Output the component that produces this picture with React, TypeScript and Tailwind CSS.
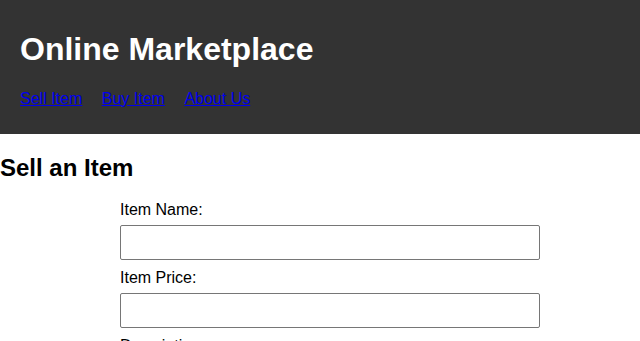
import React from 'react';

const navItems = [
    { href: '#sell', label: 'Sell Item' },
    { href: '#buy', label: 'Buy Item' },
    { href: '#about', label: 'About Us' },
];

const fields = [
    { id: 'name', label: 'Item Name:' },
    { id: 'price', label: 'Item Price:' },
    { id: 'description', label: 'Description:' },
];

const App = () => {
    return (
        <div className="min-h-screen bg-white text-black font-['Liberation_Sans',Arial,sans-serif]">
            <header className="bg-[#333333] px-5 pt-[31px] pb-[26px] text-white">
                <h1 className="text-[32px] font-bold leading-[37px]">Online Marketplace</h1>
                <nav className="mt-[22px] flex gap-[19.5px] text-base leading-[18px]">
                    {navItems.map((item) => (
                        <a key={item.href} href={item.href} className="text-[#0000ee] underline">
                            {item.label}
                        </a>
                    ))}
                </nav>
            </header>
            <main>
                <h2 className="mt-5 mb-[19px] text-2xl font-bold leading-[28px]">Sell an Item</h2>
                <form className="mx-auto w-[400px]">
                    {fields.map((field) => (
                        <div key={field.id}>
                            <label htmlFor={field.id} className="block text-base leading-[18px]">
                                {field.label}
                            </label>
                            <input
                                id={field.id}
                                type="text"
                                className="mt-[6px] mb-[9px] box-content block h-[17px] w-full rounded-[2px] border border-[#767676] px-[9px] py-[8px] text-base"
                            />
                        </div>
                    ))}
                </form>
            </main>
        </div>
    );
};

export default App;
